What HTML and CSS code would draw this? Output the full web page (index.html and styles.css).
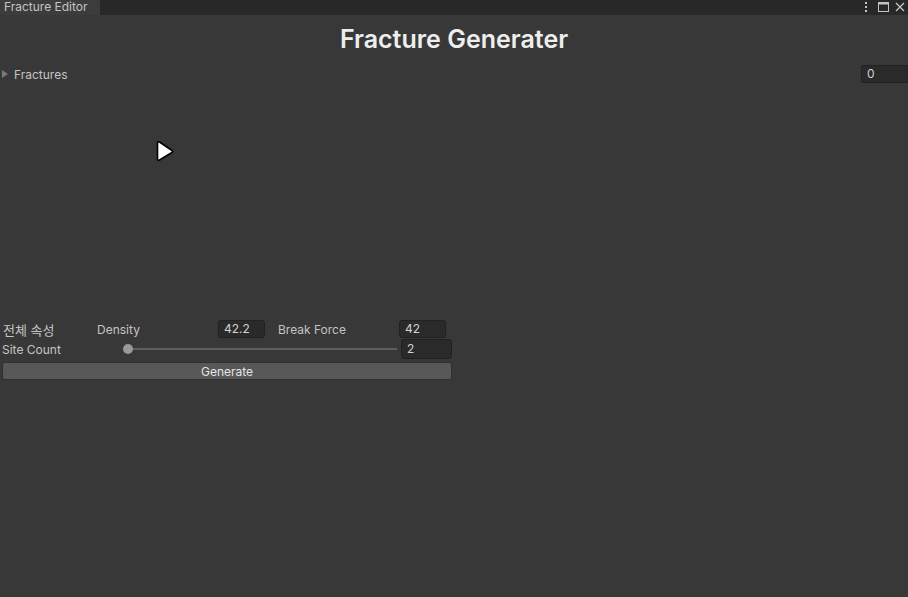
FILE: index.html
```html
<!DOCTYPE html>
<html lang="ko">
<head>
    <meta charset="UTF-8">
    <title>Fracture Editor</title>
    <link rel="stylesheet" href="styles.css">
</head>
<body>
    <div class="tabBar">
        <div class="tab">Fracture Editor</div>
        <div class="tabIcons">
            <svg class="kebab" width="4" height="10" viewBox="0 0 4 10"><rect x="1" y="0" width="2" height="2" fill="#c4c4c4"/><rect x="1" y="4" width="2" height="2" fill="#c4c4c4"/><rect x="1" y="8" width="2" height="2" fill="#c4c4c4"/></svg>
            <svg width="11" height="10" viewBox="0 0 11 10"><rect x="0.5" y="0.5" width="10" height="9" fill="none" stroke="#c4c4c4"/><rect x="0.5" y="0.5" width="10" height="2" fill="#c4c4c4"/></svg>
            <svg width="10" height="10" viewBox="0 0 10 10"><path d="M1 1 L9 9 M9 1 L1 9" stroke="#c4c4c4" stroke-width="1.3"/></svg>
        </div>
    </div>

    <div class="panel">
        <h1 class="title">Fracture Generater</h1>

        <div class="foldoutRow">
            <div class="foldout">
                <span class="arrow"></span>
                <span>Fractures</span>
            </div>
            <div class="field sizeField">0</div>
        </div>

        <div class="props">
            <div class="propRow">
                <span class="lbl lblGroup">전체 속성</span>
                <span class="lbl lblDensity">Density</span>
                <div class="field smallField">42.2</div>
                <span class="lbl lblForce">Break Force</span>
                <div class="field smallField">42</div>
            </div>
            <div class="propRow">
                <span class="lbl lblSite">Site Count</span>
                <div class="slider">
                    <span class="knob"></span>
                    <span class="track"></span>
                </div>
                <div class="field countField">2</div>
            </div>
            <button class="btn">Generate</button>
        </div>
    </div>

    <svg class="cursor" width="18" height="22" viewBox="0 0 18 22">
        <path d="M1.5 1.5 L1.5 18 Q1.5 20 3.5 19 L16 11.5 Q17 10.5 16 9.5 L3.5 1 Q1.5 0 1.5 1.5 Z" fill="#fff" stroke="#000" stroke-width="1.6" stroke-linejoin="round"/>
    </svg>
</body>
</html>
```
FILE: styles.css
```css
body {
    margin: 0;
    padding: 0;
    width: 908px;
    height: 597px;
    overflow: hidden;
    background-color: #383838;
    font-family: Inter, "Noto Sans CJK KR", sans-serif;
    font-size: 12px;
    color: #c4c4c4;
    position: relative;
}
.tabBar {
    height: 15px;
    background-color: #282828;
    display: flex;
    justify-content: space-between;
    align-items: stretch;
}
.tab {
    width: 96px;
    padding-left: 4px;
    background-color: #3c3c3c;
    line-height: 14px;
    color: #c4c4c4;
}
.tabIcons {
    display: flex;
    align-items: center;
    gap: 6px;
    padding-right: 3px;
    padding-bottom: 2px;
}
.kebab {
    margin-right: 4px;
}
.panel {
    display: flex;
    flex-direction: column;
}
.title {
    margin: 10px 0 0 0;
    text-align: center;
    font-size: 25px;
    font-weight: 600;
    line-height: 29px;
    color: #eeeeee;
}
.foldoutRow {
    display: flex;
    justify-content: space-between;
    align-items: center;
    margin-top: 11px;
    height: 18px;
}
.foldout {
    display: flex;
    align-items: center;
    gap: 6px;
    padding-left: 2px;
}
.arrow {
    width: 0;
    height: 0;
    border-top: 4px solid transparent;
    border-bottom: 4px solid transparent;
    border-left: 6px solid #7a7a7a;
}
.field {
    box-sizing: border-box;
    height: 18px;
    line-height: 16px;
    padding-left: 5px;
    background-color: #2a2a2a;
    border: 1px solid #212121;
    border-radius: 3px;
    color: #d2d2d2;
}
.sizeField {
    width: 47px;
    border-right: none;
    border-radius: 3px 0 0 3px;
}
.props {
    margin-top: 236px;
    width: 452px;
    display: flex;
    flex-direction: column;
}
.propRow {
    display: flex;
    align-items: center;
    height: 20px;
}
.lbl {
    white-space: nowrap;
}
.lblGroup {
    width: 94px;
    padding-left: 3px;
    font-size: 13px;
}
.lblDensity {
    width: 121px;
}
.smallField {
    width: 47px;
}
.lblForce {
    width: 121px;
    padding-left: 13px;
}
.lblSite {
    width: 121px;
    padding-left: 2px;
}
.slider {
    width: 274px;
    display: flex;
    align-items: center;
}
.knob {
    width: 10px;
    height: 10px;
    border-radius: 50%;
    background-color: #999999;
    flex-shrink: 0;
}
.track {
    flex: 1;
    height: 2px;
    background-color: #5e5e5e;
}
.countField {
    width: 51px;
    height: 20px;
    line-height: 18px;
    margin-left: 4px;
}
.btn {
    margin: 3px 0 0 2px;
    width: 450px;
    height: 18px;
    padding: 0;
    background-color: #585858;
    border: 1px solid #303030;
    border-radius: 3px;
    font-family: Inter, sans-serif;
    font-size: 12px;
    color: #e4e4e4;
}
.cursor {
    position: absolute;
    left: 156px;
    top: 141px;
}
```
